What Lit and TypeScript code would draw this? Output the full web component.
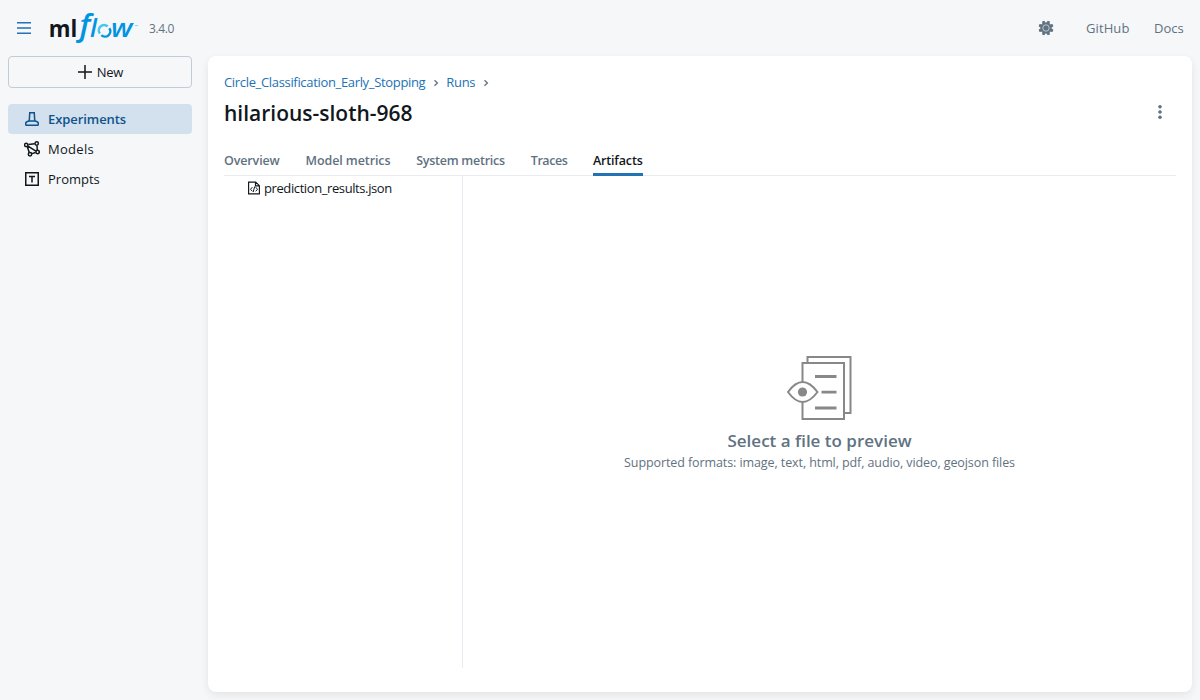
import { LitElement, html, css, svg } from "lit";
import { customElement } from "lit/decorators.js";

const tabs = [
  { id: "overview", label: "Overview" },
  { id: "model", label: "Model metrics" },
  { id: "system", label: "System metrics" },
  { id: "traces", label: "Traces" },
  { id: "artifacts", label: "Artifacts" },
];

const gearTeeth = [0, 45, 90, 135, 180, 225, 270, 315];

@customElement("app-root")
export class AppRoot extends LitElement {
  static styles = css`
    :host {
      display: flex;
      flex-direction: column;
      height: 100vh;
      box-sizing: border-box;
      background: #f6f7f9;
      color: #11171c;
      font-family: "Open Sans", "Noto Sans", sans-serif;
      font-size: 13px;
      line-height: 20px;
      overflow: hidden;
    }
    svg { display: block; flex: none; }
    a { text-decoration: none; color: inherit; white-space: nowrap; }
    .header {
      display: flex;
      align-items: center;
      height: 56px;
      flex: none;
      padding: 0 16px;
      box-sizing: border-box;
      color: #5f7281;
    }
    .menu { color: #2272b4; }
    .logo { margin-left: 18px; overflow: visible; }
    .version { margin-left: 9px; padding-top: 2px; font-size: 12px; letter-spacing: -0.4px; }
    .links { margin-left: auto; display: flex; align-items: center; }
    .github { margin-left: 32px; width: 44px; letter-spacing: 0.1px; }
    .docs { margin-left: 24px; width: 30px; }
    .body { display: flex; flex: 1; min-height: 0; }
    .side { width: 184px; flex: none; padding: 0 8px; }
    .new {
      display: flex;
      align-items: center;
      justify-content: center;
      gap: 4px;
      box-sizing: border-box;
      width: 184px;
      height: 32px;
      border: 1px solid #c0cdd8;
      border-radius: 4px;
      margin-bottom: 16px;
      letter-spacing: -0.3px;
    }
    .nav {
      display: flex;
      align-items: center;
      gap: 8px;
      height: 30px;
      padding-left: 16px;
      border-radius: 4px;
    }
    .nav.active { background: #d3e1ee; color: #0e538b; font-weight: 600; letter-spacing: -0.07px; }
    .nav.models { letter-spacing: 0.3px; }
    .card {
      flex: 1;
      margin: 0 8px 8px;
      padding: 16px;
      background: #fff;
      border-radius: 8px;
      box-shadow: 0 3px 8px rgba(0, 0, 0, 0.08);
      display: flex;
      flex-direction: column;
      min-width: 0;
    }
    .crumbs { display: flex; align-items: center; height: 20px; color: #2272b4; letter-spacing: -0.33px; }
    .crumbs a { position: relative; top: -0.5px; }
    .crumbs svg { margin: 1px 7.5px 0 7.5px; color: #5f7281; }
    .title-row { display: flex; justify-content: space-between; align-items: center; height: 40px; padding: 0 8px 1px 0; }
    .title { margin: 0; padding-top: 2px; font-size: 21px; line-height: 28px; font-weight: 600; }
    .tabs {
      display: flex;
      gap: 25.6px;
      margin-top: 16px;
      height: 27px;
      flex: none;
      box-shadow: inset 0 -1px #e8ecf0;
      color: #5f7281;
      font-weight: 600;
      font-size: 12.5px;
      line-height: 24px;
    }
    .tab { box-sizing: border-box; height: 27px; }
    .tab.overview { width: 56px; letter-spacing: -0.13px; }
    .tab.model { width: 85px; letter-spacing: -0.1px; }
    .tab.system { width: 89px; letter-spacing: -0.26px; }
    .tab.traces { width: 36.5px; letter-spacing: -0.45px; }
    .tab.artifacts { width: 50px; letter-spacing: -0.15px; color: #11171c; border-bottom: 3px solid #2272b4; }
    .content { display: flex; flex: 1; min-height: 0; padding-bottom: 8px; }
    .files { width: 238px; flex: none; border-right: 1px solid #e8ecf0; }
    .file { display: flex; align-items: center; gap: 4px; height: 24px; padding-left: 24px; letter-spacing: -0.4px; }
    .preview {
      flex: 1;
      display: flex;
      flex-direction: column;
      align-items: center;
      padding-top: 180px;
      color: #5f7281;
    }
    .preview-title { margin-top: 9px; font-size: 17px; font-weight: 600; line-height: 24px; }
    .preview-hint { font-size: 12.5px; line-height: 20px; letter-spacing: -0.09px; }
    .word { font-family: "Open Sans", sans-serif; font-weight: 700; }
    .slant { font-family: "Open Sans", sans-serif; font-style: italic; font-weight: 600; }
  `;

  private chevron() {
    return html`<svg width="6" height="8" viewBox="0 0 6 8"><path d="M1.5 1.2 4.4 4 1.5 6.8" fill="none" stroke="currentColor" stroke-width="1.3"/></svg>`;
  }

  render() {
    return html`
      <header class="header">
        <svg class="menu" width="16" height="16" viewBox="0 0 16 16"><path d="M1 2.75h14M1 8h14M1 13.25h14" stroke="currentColor" stroke-width="1.5"/></svg>
        <svg class="logo" width="90" height="36" viewBox="0 0 90 36" role="img" aria-label="mlflow">
          <defs>
            <linearGradient id="ring" gradientUnits="userSpaceOnUse" x1="49" y1="15" x2="60" y2="26"><stop offset=".35" stop-color="#43c9ed"/><stop offset=".65" stop-color="#0194e2"/></linearGradient>
          </defs>
          <text class="word" x="-1.2" y="27" font-size="24" textLength="28.500" lengthAdjust="spacingAndGlyphs" fill="#11171c">ml</text>
          <text class="slant" x="29.500" y="26" font-size="31.500" fill="#0194e2">f</text>
          <text class="slant" x="40" y="27" font-size="25" fill="#0194e2">l</text>
          <g fill="none" stroke="url(#ring)" stroke-width="2.500"><path d="M49.900 23.600A5.300 5.300 0 0 1 57.600 16.400M59.300 18.200A5.300 5.300 0 0 1 51.300 25.100"/></g>
          <text class="slant" x="61" y="27" font-size="25" textLength="21.500" lengthAdjust="spacingAndGlyphs" fill="#0194e2">w</text>
          <path d="M85 15.500h3" stroke="#8bd3f2"/>
        </svg>
        <span class="version">3.4.0</span>
        <nav class="links">
          <svg width="16" height="16" viewBox="0 0 16 16">
            ${gearTeeth.map((a) => svg`<path d="M6.9 .5 9.1 .5 10.2 4H5.8Z" transform="rotate(${a + 22.5} 8 8)" fill="#5f7281"/>`)}
            <circle cx="8" cy="8" r="4.8" fill="#5f7281"/>
            <circle cx="8" cy="8" r="3.2" fill="none" stroke="#c9d0d6" stroke-width=".9"/>
          </svg>
          <a class="github">GitHub</a>
          <a class="docs">Docs</a>
        </nav>
      </header>
      <div class="body">
        <aside class="side">
          <div class="new">
            <svg width="16" height="16" viewBox="0 0 16 16"><path d="M8 1v14M1 8h14" stroke="currentColor" stroke-width="1.5"/></svg>
            <span>New</span>
          </div>
          <a class="nav active">
            <svg width="16" height="16" viewBox="0 0 16 16" fill="none" stroke="currentColor" stroke-width="1.5"><path d="M5 1.75h6M5.75 2 5.25 9.7 2.5 11a1.300 1.300 0 0 0-.75 1.200v1.300q0 .75.75.75h11q.75 0 .75-.75v-1.300a1.300 1.300 0 0 0-.75-1.200L10.750 9.700 10.250 2M5 10h6"/></svg>
            <span>Experiments</span>
          </a>
          <a class="nav models">
            <svg width="16" height="16" viewBox="0 0 16 16" fill="none" stroke="currentColor" stroke-width="1.5"><path d="M4.400 3.600 10.700 2.800M4 5.100l7.900 5M3.300 5.700l1.900 5.600M7.900 12.600l3.700-1.100M13 4.600l.3 4.600"/><circle cx="2.200" cy="3.900" r="1.700"/><circle cx="12.700" cy="2.500" r="1.700"/><circle cx="6" cy="13.300" r="1.700"/><circle cx="13.600" cy="11" r="1.700"/></svg>
            <span>Models</span>
          </a>
          <a class="nav">
            <svg width="16" height="16" viewBox="0 0 16 16" fill="none" stroke="currentColor" stroke-width="1.5"><path d="M1.750 1.750h12.500v12.500H1.750ZM5 5.500h6M8 5.500V11.500"/></svg>
            <span>Prompts</span>
          </a>
        </aside>
        <main class="card">
          <div class="crumbs">
            <a>Circle_Classification_Early_Stopping</a>${this.chevron()}<a>Runs</a>${this.chevron()}
          </div>
          <div class="title-row">
            <h1 class="title">hilarious-sloth-968</h1>
            <svg width="16" height="16" viewBox="0 0 16 16" fill="#5f7281"><circle cx="8" cy="2.7" r="1.8"/><circle cx="8" cy="8" r="1.8"/><circle cx="8" cy="13.3" r="1.8"/></svg>
          </div>
          <div class="tabs">
            ${tabs.map((t) => html`<a class="tab ${t.id}">${t.label}</a>`)}
          </div>
          <div class="content">
            <div class="files">
              <div class="file">
                <svg width="12" height="14" viewBox="0 0 12 14" fill="none" stroke="#11171c"><path d="M.6 1.1h7.1l3.7 3.6v8.2H.6ZM7.5 1.2v3.7h3.7" stroke-width="1.15"/><path d="M4.3 6.2 2.5 8.3l1.8 2M7.7 6.2l1.8 2.1-1.8 2M6.7 5.5 5.2 11"/></svg>
                <span>prediction_results.json</span>
              </div>
            </div>
            <div class="preview">
              <svg width="65" height="64" viewBox="0 0 65 64" fill="none" stroke="#888" stroke-width="2"><path d="M20.500 7V1H63.500v56h-6"/><path d="M15.500 7H57v56H15.500Z" fill="#fff"/><path d="M28 20.500h21.500M34.500 36.200h15M28 52h21.500" stroke-width="2.800"/><path d="M1 36Q15.500 16 30.500 36Q15.500 56 1 36Z" fill="#fff"/><circle cx="15.500" cy="36" r="4.600" fill="#888" stroke="none"/></svg>
              <div class="preview-title">Select a file to preview</div>
              <div class="preview-hint">Supported formats: image, text, html, pdf, audio, video, geojson files</div>
            </div>
          </div>
        </main>
      </div>
    `;
  }
}
